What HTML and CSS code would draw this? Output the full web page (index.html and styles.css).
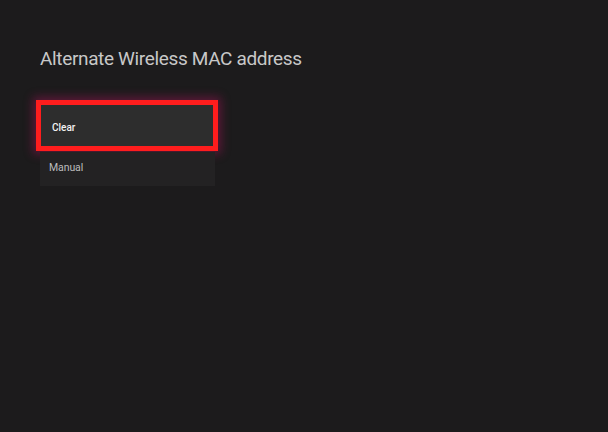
FILE: index.html
```html
<!DOCTYPE html>
<html>
<head>
<meta charset="utf-8">
<link rel="stylesheet" href="styles.css">
</head>
<body>
<div class="page">
  <h1 class="title">Alternate Wireless MAC address</h1>
  <ul class="menu">
    <li class="item item-focused">Clear</li>
    <li class="item">Manual</li>
  </ul>
</div>
</body>
</html>
```
FILE: styles.css
```css
html, body {
  margin: 0;
  padding: 0;
  background: #1c1b1c;
  width: 608px;
  height: 432px;
  overflow: hidden;
}
.page {
  padding: 46px 0 0 40px;
  font-family: "Roboto", "Open Sans", sans-serif;
}
.title {
  margin: 0;
  font-weight: 400;
  font-size: 19px;
  line-height: 26px;
  color: #c8c8c8;
  letter-spacing: -0.35px;
}
.menu {
  list-style: none;
  margin: 0;
  padding: 0;
  padding-top: 33px;
  width: 175px;
  display: flex;
  flex-direction: column;
  align-items: flex-start;
  gap: 6px;
}
.item {
  box-sizing: border-box;
  width: 175px;
  height: 34px;
  display: flex;
  align-items: center;
  padding: 0 0 3px 9px;
  font-size: 10.5px;
  letter-spacing: -0.1px;
  color: #bcbcbc;
  background: #232223;
}
.item-focused {
  width: 172px;
  height: 41px;
  margin-left: 1px;
  padding: 3px 0 0 11px;
  background: #2d2d2d;
  color: #f2f2f2;
  font-weight: 500;
  font-size: 10px;
  letter-spacing: 0;
  outline: 5px solid #ff1d1d;
  outline-offset: 0;
  box-shadow: 0 0 0 5px #ff1d1d, 0 0 9px 8px rgba(170, 20, 90, 0.45);
}
```
